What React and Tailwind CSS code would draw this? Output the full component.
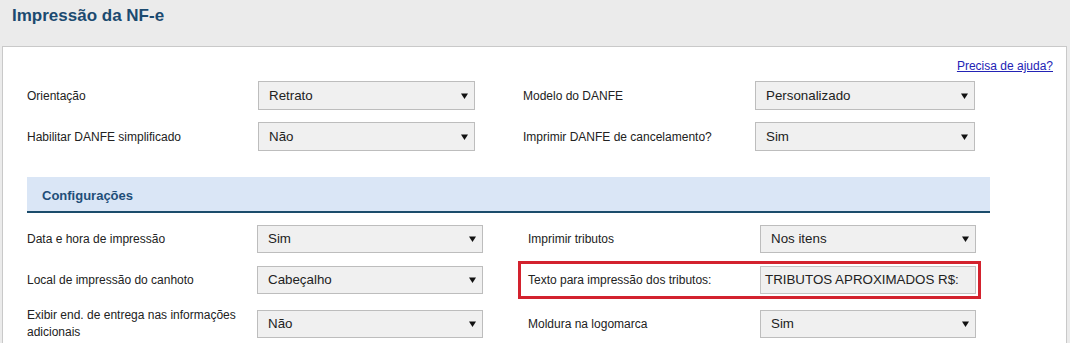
import React from 'react';

function Arrow() {
  return (
    <svg width="7" height="6" viewBox="0 0 7 6" className="shrink-0">
      <path d="M0 0.5 L7 0.5 L3.5 6 Z" fill="#111" />
    </svg>
  );
}

function Select({ value, w, h = 'h-[29px]' }) {
  return (
    <div className={`${w} ${h} flex items-center justify-between bg-[#f0f0f0] border border-[#bdbdbd] pl-[10px] pr-[6px] text-[13.33px] text-[#222]`}>
      <span>{value}</span>
      <Arrow />
    </div>
  );
}

function TopRow({ left, leftValue, right, rightValue }) {
  return (
    <div className="flex items-center h-[29px]">
      <div className="w-[231px] text-[12px] text-[#222]">{left}</div>
      <Select value={leftValue} w="w-[217px]" />
      <div className="ml-[48px] w-[232px] text-[12px] text-[#222]">{right}</div>
      <Select value={rightValue} w="w-[220px]" />
    </div>
  );
}

function SectionRow({ left, leftValue, right, rightValue, highlight, input }) {
  return (
    <div className="flex items-center min-h-[28px]">
      <div className="w-[230px] pr-[12px] text-[12px] leading-[17px] text-[#222]">{left}</div>
      <Select value={leftValue} w="w-[226px]" h="h-[28px]" />
      <div
        className={`ml-[35px] flex items-center border-[3px] pl-[7px] pr-[2px] ${
          highlight ? 'border-[#d3222e] -my-[5px] py-[2px]' : 'border-transparent -my-[3px]'
        }`}
      >
        <div className="w-[232px] text-[12px] text-[#222]">{right}</div>
        {input ? (
          <div className="w-[216px] h-[28px] flex items-center bg-[#f0f0f0] border border-[#c4c4c4] pl-[4px] text-[13.33px] text-[#222]">
            {rightValue}
          </div>
        ) : (
          <Select value={rightValue} w="w-[216px]" h="h-[28px]" />
        )}
      </div>
    </div>
  );
}

export default function App() {
  return (
    <div className="w-[1070px] h-[343px] overflow-hidden bg-[#ebebeb] font-['Liberation_Sans',Arial,sans-serif]">
      <div className="h-[46px] pl-[12px] pt-[6px]">
        <h1 className="text-[17px] leading-[20px] font-bold text-[#1b4a70]">Impressão da NF-e</h1>
      </div>

      <div className="ml-[2px] w-[1065px] h-[320px] border border-[#c9c9c9] bg-white pl-[24px] pr-[13px]">
        <div className="flex justify-end mt-[11px] h-[16px]">
          <a href="#" className="text-[12px] leading-[16px] text-[#2323b5] underline">
            Precisa de ajuda?
          </a>
        </div>

        <div className="mt-[7px] flex flex-col gap-[12px]">
          <TopRow left="Orientação" leftValue="Retrato" right="Modelo do DANFE" rightValue="Personalizado" />
          <TopRow
            left="Habilitar DANFE simplificado"
            leftValue="Não"
            right="Imprimir DANFE de cancelamento?"
            rightValue="Sim"
          />
        </div>

        <div className="mt-[26px] w-[963px] h-[36px] bg-[#dae6f6] border-b-2 border-[#1b4c6b] pl-[15px] pt-[3px] flex items-center">
          <span className="text-[13px] font-bold text-[#1f4e79]">Configurações</span>
        </div>

        <div className="mt-[12px] flex flex-col gap-[13px]">
          <SectionRow left="Data e hora de impressão" leftValue="Sim" right="Imprimir tributos" rightValue="Nos itens" />
          <SectionRow
            left="Local de impressão do canhoto"
            leftValue="Cabeçalho"
            right="Texto para impressão dos tributos:"
            rightValue="TRIBUTOS APROXIMADOS R$:"
            highlight
            input
          />
          <SectionRow
            left="Exibir end. de entrega nas informações adicionais"
            leftValue="Não"
            right="Moldura na logomarca"
            rightValue="Sim"
          />
        </div>
      </div>
    </div>
  );
}
